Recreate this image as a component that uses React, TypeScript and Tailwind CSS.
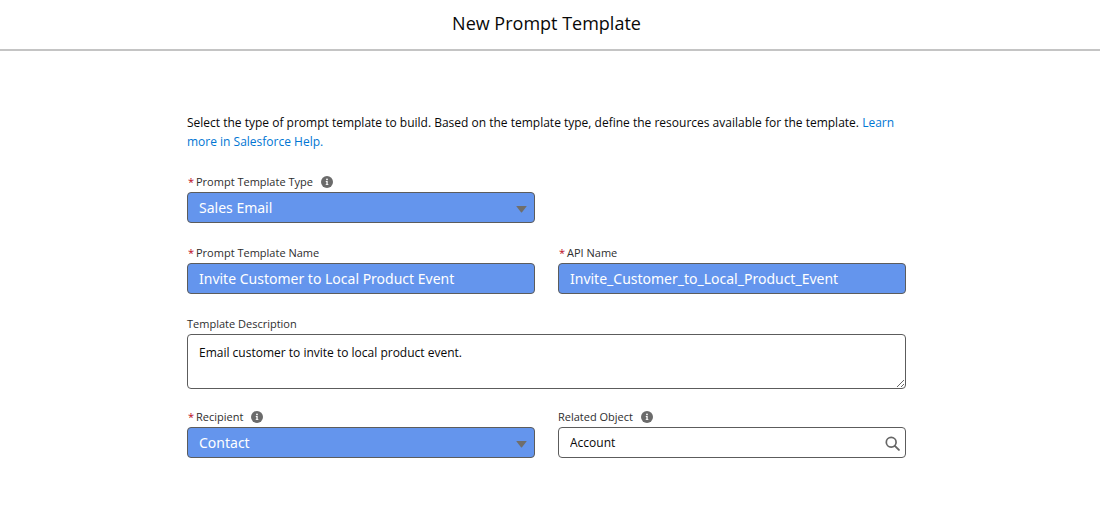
import React, { useState } from 'react';

interface FieldLabelProps {
  htmlFor: string;
  text: string;
  required?: boolean;
  info?: boolean;
}

const controlClass =
  'block w-full h-[31px] rounded-sm border border-[#5c5c5c] pl-[11px] outline-none';
const filledClass = `${controlClass} bg-[#6495ed] text-white text-sm font-['Noto_Sans','Open_Sans',sans-serif]`;

const InfoIcon: React.FC = () => (
  <svg className="w-3 h-3" viewBox="0 0 12 12" aria-hidden="true">
    <circle cx="6" cy="6" r="6" fill="#6b6b6b" />
    <circle cx="6" cy="3.4" r="0.9" fill="#fff" />
    <path d="M4.8 5h1.9v3.2h.7v.9H4.7v-.9h.7V5.9h-.6z" fill="#fff" />
  </svg>
);

const FieldLabel: React.FC<FieldLabelProps> = ({ htmlFor, text, required, info }) => (
  <div className="flex items-center h-5 text-[11px] text-[#2e2e2e]">
    {required && <span className="w-[9px] pl-px text-[#ba0517]">*</span>}
    <label htmlFor={htmlFor} className="whitespace-nowrap">{text}</label>
    {info && (
      <button type="button" aria-label={`Help for ${text}`} className="ml-2">
        <InfoIcon />
      </button>
    )}
  </div>
);

interface SelectFieldProps {
  id: string;
  label: string;
  options: string[];
}

const SelectField: React.FC<SelectFieldProps> = ({ id, label, options }) => {
  const [value, setValue] = useState(options[0]);

  return (
    <div>
      <FieldLabel htmlFor={id} text={label} required info />
      <div className="relative">
        <select
          id={id}
          value={value}
          onChange={(e) => setValue(e.target.value)}
          className={`${filledClass} appearance-none`}
        >
          {options.map((option) => (
            <option key={option}>{option}</option>
          ))}
        </select>
        <svg
          className="absolute right-2 top-[13px] w-[11px] h-2 pointer-events-none"
          viewBox="0 0 11 8"
          aria-hidden="true"
        >
          <path d="M0.8 1h9.4q.7 0 .3.6L6 7.3q-.5.5-1 0L.5 1.6Q.1 1 .8 1z" fill="#706e6b" />
        </svg>
      </div>
    </div>
  );
};

const App: React.FC = () => {
  const [name, setName] = useState('Invite Customer to Local Product Event');
  const [apiName, setApiName] = useState('Invite_Customer_to_Local_Product_Event');
  const [description, setDescription] = useState('Email customer to invite to local product event.');
  const [relatedObject, setRelatedObject] = useState('Account');

  return (
    <div className="bg-white font-['Open_Sans','Noto_Sans',sans-serif] text-[#080808]">
      <header className="flex items-center justify-center h-[51px] pr-[7px] pb-1 border-b-2 border-[#c4c4c4]">
        <h1 className="text-lg">New Prompt Template</h1>
      </header>

      <main className="pt-[62px] pr-[7px]">
        <form className="mx-auto max-w-[719px]" onSubmit={(e) => e.preventDefault()}>
          <p className="mb-[21px] text-xs leading-[19px]">
            Select the type of prompt template to build. Based on the template type, define the
            resources available for the template.{' '}
            <a href="#help" className="text-[#0176d3]">Learn more in Salesforce Help.</a>
          </p>

          <div className="grid grid-cols-2 gap-x-[23px] gap-y-5 mb-5">
            <SelectField
              id="template-type"
              label="Prompt Template Type"
              options={['Sales Email', 'Field Generation', 'Record Summary', 'Flex']}
            />
            <div className="col-start-1">
              <FieldLabel htmlFor="template-name" text="Prompt Template Name" required />
              <input
                id="template-name"
                type="text"
                value={name}
                onChange={(e) => setName(e.target.value)}
                className={filledClass}
              />
            </div>
            <div>
              <FieldLabel htmlFor="api-name" text="API Name" required />
              <input
                id="api-name"
                type="text"
                value={apiName}
                onChange={(e) => setApiName(e.target.value)}
                className={filledClass}
              />
            </div>
          </div>

          <div className="mb-[18px]">
            <FieldLabel htmlFor="description" text="Template Description" />
            <textarea
              id="description"
              value={description}
              onChange={(e) => setDescription(e.target.value)}
              className="block w-full h-[55px] px-[11px] py-2 rounded-sm border border-[#5c5c5c] text-xs leading-5 resize outline-none"
            />
          </div>

          <div className="grid grid-cols-2 gap-x-[23px]">
            <SelectField id="recipient" label="Recipient" options={['Contact', 'Lead']} />
            <div>
              <FieldLabel htmlFor="related-object" text="Related Object" info />
              <div className="relative">
                <input
                  id="related-object"
                  type="text"
                  value={relatedObject}
                  onChange={(e) => setRelatedObject(e.target.value)}
                  className={`${controlClass} bg-white text-xs`}
                />
                <svg
                  className="absolute right-[6px] top-[9px] w-[15px] h-[15px] pointer-events-none"
                  viewBox="0 0 15 15"
                  fill="none"
                  stroke="#666"
                  strokeLinecap="round"
                  aria-hidden="true"
                >
                  <circle cx="6.2" cy="6.2" r="4.9" strokeWidth="1.7" />
                  <path d="M9.8 9.8l4.1 4.1" strokeWidth="1.9" />
                </svg>
              </div>
            </div>
          </div>
        </form>
      </main>
    </div>
  );
};

export default App;
